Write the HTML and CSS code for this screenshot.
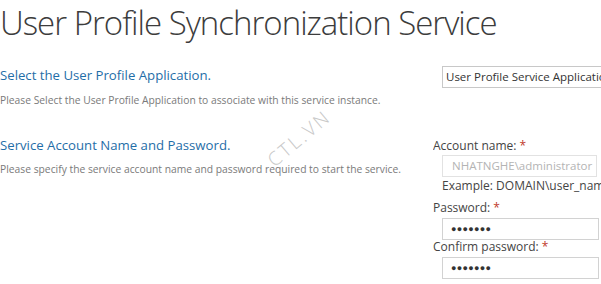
FILE: index.html
```html
<!DOCTYPE html>
<html>
<head>
<meta charset="utf-8">
<link rel="stylesheet" href="styles.css">
</head>
<body>
<div class="page">
  <h1 class="title">User Profile Synchronization Service</h1>
  <div class="section s1">
    <div class="desc">
      <h3 class="head">Select the User Profile Application.</h3>
      <p class="info">Please Select the User Profile Application to associate with this service instance.</p>
    </div>
    <div class="fields">
      <div class="select">User Profile Service Application</div>
    </div>
  </div>
  <div class="section s2">
    <div class="desc">
      <h3 class="head">Service Account Name and Password.</h3>
      <p class="info">Please specify the service account name and password required to start the service.</p>
    </div>
    <div class="fields">
      <div class="label">Account name: <span class="req">*</span></div>
      <div class="input disabled">NHATNGHE\administrator</div>
      <div class="example">Example: DOMAIN\user_name</div>
      <div class="label lbl-pass">Password: <span class="req">*</span></div>
      <div class="input dots">&#9679;&#9679;&#9679;&#9679;&#9679;&#9679;&#9679;</div>
      <div class="label">Confirm password: <span class="req">*</span></div>
      <div class="input dots">&#9679;&#9679;&#9679;&#9679;&#9679;&#9679;&#9679;</div>
    </div>
  </div>
  <div class="watermark">CTL.VN</div>
</div>
</body>
</html>
```
FILE: styles.css
```css
html, body {
  margin: 0;
  padding: 0;
  background: #ffffff;
  overflow: hidden;
}
.page {
  position: relative;
  width: 601px;
  height: 284px;
  overflow: hidden;
  font-family: "Open Sans", "Noto Sans", sans-serif;
}
.title {
  margin: 0;
  padding: 1px 0 0 0;
  font-weight: 300;
  font-size: 33px;
  letter-spacing: -1px;
  line-height: 44px;
  color: #3c3c3c;
  white-space: nowrap;
}
.section {
  display: flex;
}
.desc {
  width: 433px;
  flex: none;
}
.fields {
  flex: none;
  width: 168px;
  overflow: hidden;
}
.head {
  margin: 0;
  font-weight: 500;
  font-size: 13.2px;
  line-height: 18px;
  color: #1f6ea8;
  white-space: nowrap;
}
.info {
  margin: 0;
  font-size: 10.3px;
  line-height: 14px;
  color: #7a7a7a;
  white-space: nowrap;
}
.s1 {
  margin-top: 21px;
}
.s1 .info {
  margin-top: 9px;
}
.s1 .fields {
  padding-left: 9px;
}
.select {
  width: 200px;
  height: 20px;
  border: 1px solid #c8c8c8;
  font-size: 11.5px;
  line-height: 20px;
  padding-left: 3px;
  color: #333;
  white-space: nowrap;
  overflow: hidden;
}
.s2 {
  margin-top: 29px;
}
.s2 .info {
  margin-top: 8px;
}
.s2 .fields {
  padding-top: 3px;
}
.label {
  font-size: 12px;
  line-height: 14px;
  color: #444;
  white-space: nowrap;
}
.lbl-pass {
  margin-top: 7px;
}
.req {
  color: #c0392b;
}
.input {
  margin-left: 9px;
  width: 147px;
  height: 20px;
  border: 1px solid #d2d2d2;
  font-size: 11.5px;
  line-height: 20px;
  padding-left: 9px;
  white-space: nowrap;
  overflow: hidden;
  margin-top: 3px;
}
.disabled {
  margin-top: 2px;
  width: 144px;
  color: #b4b4b4;
  border-color: #e2e2e2;
}
.dots {
  font-size: 9px;
  letter-spacing: 0.3px;
  color: #333;
  padding-left: 8px;
}
.example {
  margin-left: 9px;
  margin-top: 1px;
  font-size: 12px;
  line-height: 16px;
  color: #444;
  white-space: nowrap;
}
.watermark {
  position: absolute;
  left: 299px;
  top: 138px;
  font-size: 19px;
  font-weight: 300;
  color: #c8c8c8;
  letter-spacing: 2.5px;
  transform: translate(-50%, -50%) rotate(-40deg);
}
```
